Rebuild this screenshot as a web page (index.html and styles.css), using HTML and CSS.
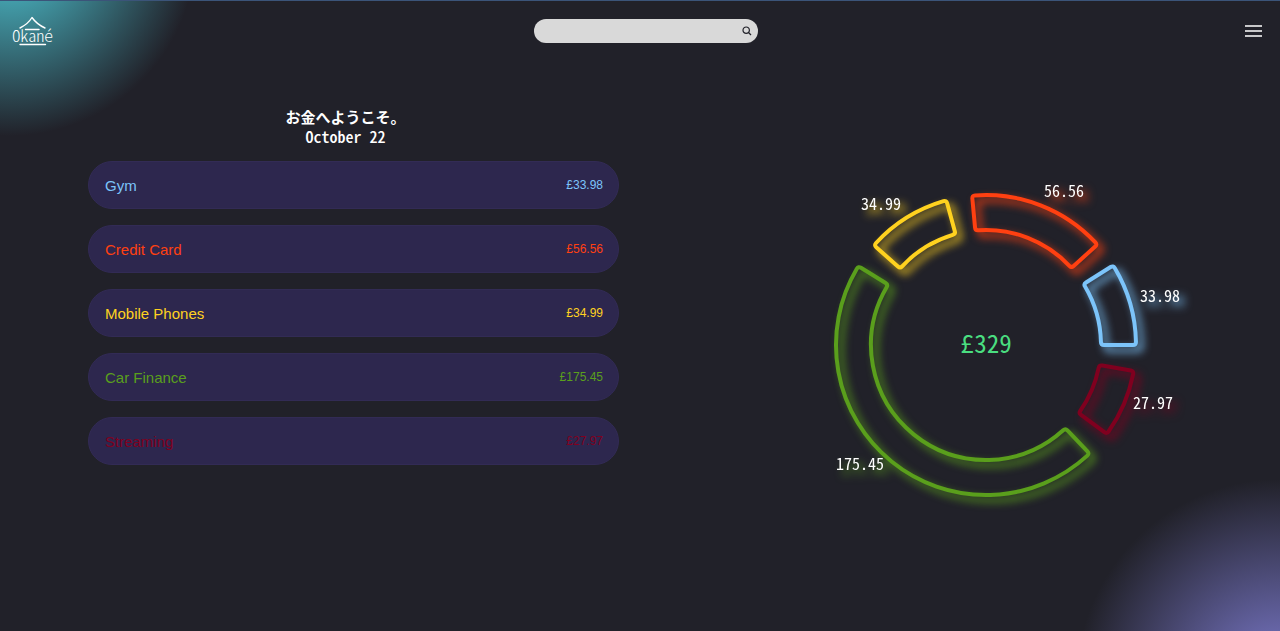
FILE: index.html
```html
<!DOCTYPE html>
<html lang="en">
<head>
<meta charset="utf-8">
<meta name="viewport" content="width=device-width, initial-scale=1">
<title>Okané</title>
<link rel="stylesheet" href="styles.css">
</head>
<body>
<header class="topbar">
  <a class="logo" href="#" aria-label="Okané home">
    <svg class="logo-art" width="42" height="32" viewBox="0 0 42 32" aria-hidden="true">
      <path d="M8 13Q16 9 20 2.5Q24.500 9 33 13M13.500 14.500H27M8 29.500H33.500"/>
      <text x="20.500" y="27" text-anchor="middle">Okané</text>
    </svg>
  </a>
  <form class="search" role="search">
    <input class="search-input" type="search" aria-label="Search">
    <button class="search-button" type="submit" aria-label="Search">
      <svg width="10" height="10" viewBox="0 0 10 10" aria-hidden="true"><circle cx="4.200" cy="4.200" r="3.200"/><path d="M6.500 6.500L9 9"/></svg>
    </button>
  </form>
  <button class="menu" type="button" aria-label="Menu">
    <svg width="17" height="12" viewBox="0 0 17 12" aria-hidden="true"><path d="M0 1H17M0 6H17M0 11H17"/></svg>
  </button>
</header>
<main class="content">
  <section class="bills">
    <h1 class="heading"><span class="welcome" lang="ja">お金へようこそ。</span><span class="month">October 22</span></h1>
    <ul class="list">
      <li class="bill gym"><span>Gym</span><span class="amount">£33.98</span></li>
      <li class="bill credit"><span>Credit Card</span><span class="amount">£56.56</span></li>
      <li class="bill phones"><span>Mobile Phones</span><span class="amount">£34.99</span></li>
      <li class="bill car"><span>Car Finance</span><span class="amount">£175.45</span></li>
      <li class="bill streaming"><span>Streaming</span><span class="amount">£27.97</span></li>
    </ul>
  </section>
  <section class="chart-panel" aria-label="Spending chart">
    <svg class="chart" viewBox="-206 -170 412 340">
      <g class="slice gym" data-value="33.98"><path/><text x="174" y="-43">33.98</text></g>
      <g class="slice credit" data-value="56.56"><path/><text x="78" y="-148">56.56</text></g>
      <g class="slice phones" data-value="34.99"><path/><text x="-105" y="-135">34.99</text></g>
      <g class="slice car" data-value="175.45"><path/><text x="-126" y="125">175.45</text></g>
      <g class="slice streaming" data-value="27.97"><path/><text x="167" y="64">27.97</text></g>
      <text class="total" x="0" y="8">£329</text>
    </svg>
  </section>
</main>
<script src="chart.js"></script>
</body>
</html>
```
FILE: styles.css
```css
* { box-sizing: border-box; }
body {
  margin: 0;
  min-height: 100vh;
  border-top: 1px solid #3b5479;
  font-family: "Liberation Sans", Arial, sans-serif;
  color: #fff;
  background:
    radial-gradient(circle at 10px -50px, #4fcbd9, rgba(79, 203, 217, 0) 186px),
    radial-gradient(circle at 100% calc(100% + 52px), #7e7cd1, rgba(126, 124, 209, 0) 204px),
    #212129;
  background-repeat: no-repeat;
}
.topbar {
  display: grid;
  grid-template-columns: 1fr 224px 1fr;
  align-items: center;
  height: 60px;
  padding-left: 12px;
}
.logo { justify-self: start; display: flex; }
.logo-art { overflow: visible; }
.logo-art path { fill: none; stroke: #fff; stroke-width: 1.4; stroke-linecap: round; stroke-linejoin: round; }
.logo-art text {
  fill: #fff;
  font-family: "Noto Sans CJK JP", sans-serif;
  font-size: 16px;
  font-weight: 300;
  font-feature-settings: "hwid";
}
.search {
  display: flex;
  align-items: center;
  height: 24px;
  padding-right: 6px;
  border-radius: 12px;
  background: #d9d9d9;
}
.search-input { flex: 1; min-width: 0; height: 24px; padding: 0 12px; border: 0; background: none; outline: 0; }
.search-button { display: flex; padding: 0; border: 0; background: none; width: 10px; }
.search-button svg { fill: none; stroke: #212129; stroke-width: 1.2; }
.menu { justify-self: end; display: flex; padding: 0; margin-right: 18px; border: 0; background: none; }
.menu path { stroke: #fff; stroke-width: 1.5; }
.content {
  display: grid;
  grid-template-columns: minmax(0, 531px) 412px;
  justify-content: space-between;
  padding: 46px 88px;
}
.heading {
  display: flex;
  flex-direction: column;
  align-items: center;
  margin: 0 16px 16px 0;
  font-family: "Noto Sans CJK JP", sans-serif;
  font-size: 16px;
}
.welcome { font-size: 15px; line-height: 20px; }
.month { font-weight: 500; line-height: 18px; font-feature-settings: "hwid"; }
.list { display: grid; gap: 16px; margin: 0; padding: 0; list-style: none; }
.bill {
  display: flex;
  align-items: center;
  justify-content: space-between;
  height: 48px;
  padding: 0 15px 0 16px;
  border: 1px solid #322b55;
  border-radius: 24px;
  background: #2d274e;
  color: var(--tone);
  font-size: 15px;
}
.amount { font-size: 12px; }
.gym { --tone: #7cc4fa; }
.credit { --tone: #ff4011; }
.phones { --tone: #ffd21f; }
.car { --tone: #5a9f1c; }
.streaming { --tone: #80001f; }
.chart-panel { padding-top: 68px; }
.chart { display: block; width: 100%; overflow: visible; }
.chart text {
  fill: #fff;
  font-family: "Noto Sans CJK JP", sans-serif;
  font-size: 16px;
  font-feature-settings: "hwid";
  text-anchor: middle;
}
.slice { filter: drop-shadow(5px 5px 4px var(--tone)); }
.slice path { fill: none; stroke: var(--tone); stroke-width: 4; stroke-linejoin: round; }
.chart .total { fill: #4ade80; font-size: 25px; }
```
FILE: chart.js
```js
const OUTER = 150, INNER = 115, GAP = 10, CORNER = 3;
const slices = [...document.querySelectorAll('.slice')];
const sum = slices.reduce((s, el) => s + Number(el.dataset.value), 0);
const point = (radius, degrees) => {
  const a = degrees * Math.PI / 180;
  return `${radius * Math.cos(a)} ${-radius * Math.sin(a)}`;
};
let start = 0;
for (const el of slices) {
  const sweep = el.dataset.value / sum * (360 - GAP * slices.length);
  const end = start + sweep;
  const outerTrim = CORNER / OUTER * 180 / Math.PI;
  const innerTrim = CORNER / INNER * 180 / Math.PI;
  const large = sweep > 180 ? 1 : 0;
  el.querySelector('path').setAttribute('d', [
    `M${point(OUTER, start + outerTrim)}`,
    `A${OUTER} ${OUTER} 0 ${large} 0 ${point(OUTER, end - outerTrim)}`,
    `Q${point(OUTER, end)} ${point(OUTER - CORNER, end)}`,
    `L${point(INNER + CORNER, end)}`,
    `Q${point(INNER, end)} ${point(INNER, end - innerTrim)}`,
    `A${INNER} ${INNER} 0 ${large} 1 ${point(INNER, start + innerTrim)}`,
    `Q${point(INNER, start)} ${point(INNER + CORNER, start)}`,
    `L${point(OUTER - CORNER, start)}`,
    `Q${point(OUTER, start)} ${point(OUTER, start + outerTrim)}Z`
  ].join(''));
  start = end + GAP;
}
```
